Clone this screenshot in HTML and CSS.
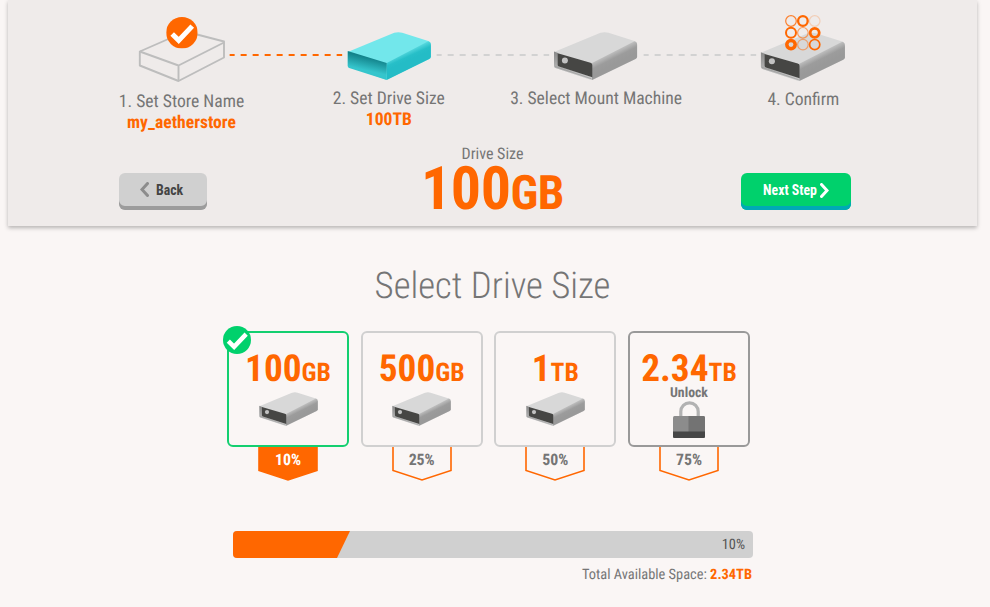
FILE: index.html
```html
<!DOCTYPE html>
<html lang="en">
<head>
<meta charset="utf-8">
<title>Select Drive Size</title>
<link rel="stylesheet" href="styles.css">
</head>
<body>
<svg class="defs" aria-hidden="true">
  <defs>
    <linearGradient id="side" gradientUnits="userSpaceOnUse" x1="56" y1="17" x2="63" y2="31">
      <stop offset="0" stop-color="#d8d8d8"/><stop offset=".65" stop-color="#9c9c9c"/><stop offset="1" stop-color="#999"/>
    </linearGradient>
    <linearGradient id="rim" x1="0" y1="0" x2="0" y2="1">
      <stop offset="0" stop-color="#888"/><stop offset="1" stop-color="#d0d0d0"/>
    </linearGradient>
    <linearGradient id="tealSide" gradientUnits="userSpaceOnUse" x1="57" y1="17" x2="62" y2="28">
      <stop offset="0" stop-color="#72e7eb"/><stop offset=".7" stop-color="#27bfc8"/><stop offset="1" stop-color="#24bcc6"/>
    </linearGradient>
    <linearGradient id="tealFront" gradientUnits="userSpaceOnUse" x1="16" y1="24" x2="13" y2="37">
      <stop offset="0" stop-color="#12828a"/><stop offset="1" stop-color="#35c5cc"/>
    </linearGradient>
    <symbol id="drive" viewBox="0 0 84 48">
      <path fill="#d8d8d8" d="M.5 20 47 .8Q51-.4 55 .7L81 9Q83.700 10 83.700 13V24.500Q83.700 26 82 27L40 47.500Q38.500 48.300 37 47.700L2 36Q.5 35.500.5 34Z"/>
      <path fill="url(#side)" d="M38.500 31 81 9.200Q83.700 10 83.700 13V24.500Q83.700 26 82 27L38.500 48Z"/>
      <path fill="url(#rim)" d="M.5 19.500 4.500 21V34L38.500 45V48L2 36Q.5 35.500.5 34Z"/>
      <path fill="none" stroke="#999" stroke-width=".7" d="M1.500 34.500 38 46.800"/>
      <path fill="#464644" d="M4.200 21.300 37 30.800Q38.800 31.300 38.800 33V45.300L5.500 34.600Q4.200 34.200 4.200 33Z"/>
      <circle cx="11.400" cy="28.400" r="3" fill="#c2c2c2"/>
    </symbol>
    <symbol id="tick" viewBox="0 0 30 30">
      <circle cx="15" cy="15" r="15" fill="currentColor"/>
      <path fill="none" stroke="#fff" stroke-width="4.800" d="M5.700 16.200 11.900 22.300 24.800 8.700"/>
    </symbol>
  </defs>
</svg>

<header class="panel">
  <div class="steps">
    <div class="step step-done">
      <svg class="step-icon" viewBox="0 0 88 76">
        <g fill="none" stroke="#bdbdbd" stroke-width="1.900" stroke-linejoin="round">
          <path d="M1.800 43.500 47.500 23.500 86 33.500V49.500L40.500 73 1.800 57.500Z"/>
          <path d="M1.800 43.500 40.500 57.500 86 34.500M40.500 57.500V73"/>
        </g>
        <use href="#tick" x="28.200" y="9" width="31.500" height="31.500" color="#ff6700"/>
      </svg>
      <div class="step-label">1. Set Store Name</div>
      <div class="step-value">my_aetherstore</div>
    </div>
    <svg class="link link-done" viewBox="0 0 119 2"><path d="M3.500 1H116"/></svg>
    <div class="step step-current">
      <svg class="step-icon" viewBox="0 0 88 76">
        <svg x="2.200" y="24" width="84" height="48" viewBox="0 0 84 48">
          <path fill="#72e7eb" d="M.5 20 47 .8Q51-.4 55 .7L81 9Q83.700 10 83.700 13V24.500Q83.700 26 82 27L39 47.800.5 34Z"/>
          <path fill="url(#tealSide)" d="M39.500 31 81 9.200Q83.700 10 83.700 13V24.500Q83.700 26 82 27L39.500 48Z"/>
          <path fill="url(#tealFront)" d="M.5 19 39.500 31V48L2 36Q.5 35.500.5 34Z"/>
        </svg>
      </svg>
      <div class="step-label">2. Set Drive Size</div>
      <div class="step-value">100TB</div>
    </div>
    <svg class="link" viewBox="0 0 119 2"><path d="M3.500 1H116"/></svg>
    <div class="step">
      <svg class="step-icon" viewBox="0 0 88 76"><use href="#drive" x="1.500" y="24" width="84" height="48"/></svg>
      <div class="step-label">3. Select Mount Machine</div>
    </div>
    <svg class="link" viewBox="0 0 119 2"><path d="M3.500 1H116"/></svg>
    <div class="step step-last">
      <svg class="step-icon" viewBox="0 0 88 76">
        <use href="#drive" x="1.300" y="24.500" width="85" height="48.500"/>
        <g fill="none" stroke="#ff6700">
          <circle cx="32" cy="13" r="5.300" stroke-width="1.200" opacity=".8"/>
          <circle cx="43.900" cy="13" r="4.800" stroke-width="2.300"/>
          <circle cx="55.700" cy="13" r="5.300" stroke-width="1.200" opacity=".22"/>
          <circle cx="32" cy="24.800" r="5" stroke-width="2"/>
          <circle cx="43.900" cy="24.800" r="5.300" stroke-width="1.200" opacity=".6"/>
          <circle cx="55.700" cy="24.800" r="4.500" stroke-width="2.800"/>
          <circle cx="32" cy="36.600" r="4.200" stroke-width="3.500"/>
          <circle cx="43.900" cy="36.600" r="5.300" stroke-width="1.200" opacity=".5"/>
          <circle cx="55.700" cy="36.600" r="5.100" stroke-width="1.700"/>
        </g>
      </svg>
      <div class="step-label">4. Confirm</div>
    </div>
  </div>
  <div class="controls">
    <button class="btn btn-back"><svg class="chev" viewBox="0 0 9 15"><path d="M7.500 1.500 2 7.500 7.500 13.500"/></svg>Back</button>
    <div class="summary">
      <div class="summary-label">Drive Size</div>
      <div class="summary-size">100<span class="unit">GB</span></div>
    </div>
    <button class="btn btn-next">Next Step<svg class="chev" viewBox="0 0 9 15"><path d="M1.500 1.500 7 7.500 1.500 13.500"/></svg></button>
  </div>
</header>

<main class="main">
  <h1 class="title">Select Drive Size</h1>
  <div class="options">
    <div class="option option-selected">
      <svg class="badge"><use href="#tick"/></svg>
      <div class="card"><div class="size">100<span class="unit">GB</span></div><svg class="card-drive"><use href="#drive"/></svg></div>
      <div class="tag"><svg class="tag-shape" viewBox="0 0 60 34"><path d="M1-2V23.500L30 32.900 59 23.500V-2"/></svg><span class="tag-text">10%</span></div>
    </div>
    <div class="option">
      <div class="card"><div class="size">500<span class="unit">GB</span></div><svg class="card-drive"><use href="#drive"/></svg></div>
      <div class="tag"><svg class="tag-shape" viewBox="0 0 60 34"><path d="M1-2V23.500L30 32.900 59 23.500V-2"/></svg><span class="tag-text">25%</span></div>
    </div>
    <div class="option">
      <div class="card"><div class="size">1<span class="unit">TB</span></div><svg class="card-drive"><use href="#drive"/></svg></div>
      <div class="tag"><svg class="tag-shape" viewBox="0 0 60 34"><path d="M1-2V23.500L30 32.900 59 23.500V-2"/></svg><span class="tag-text">50%</span></div>
    </div>
    <div class="option option-locked">
      <div class="card"><div class="size">2.34<span class="unit">TB</span></div>
        <div class="unlock">Unlock</div>
        <svg class="lock" viewBox="0 0 32 37">
          <path fill="none" stroke="#b2b2b2" stroke-width="3.200" d="M7.800 17V10.500a8.700 8.700 0 0 1 17.400 0V17"/>
          <rect y="15" width="32" height="22" rx="1.500" fill="#8c8c8c"/>
          <path fill="#737373" d="M15.500 15H30.500Q32 15 32 16.500V31H15.500Z"/>
          <path fill="#464646" d="M0 30.500H32V35.500Q32 37 30.500 37H1.500Q0 37 0 35.500Z"/>
        </svg>
      </div>
      <div class="tag"><svg class="tag-shape" viewBox="0 0 60 34"><path d="M1-2V23.500L30 32.900 59 23.500V-2"/></svg><span class="tag-text">75%</span></div>
    </div>
  </div>
  <div class="bar"><div class="bar-fill"></div><span class="bar-text">10%</span></div>
  <div class="total">Total Available Space: <b>2.34TB</b></div>
</main>
</body>
</html>
```
FILE: styles.css
```css
* { box-sizing: border-box; }
body {
  margin: 0;
  height: 607px;
  overflow: hidden;
  background: #faf6f5;
  color: #757575;
  font-family: "Roboto Condensed", Roboto, sans-serif;
  font-stretch: 75%;
  text-rendering: geometricPrecision;
}
svg { display: block; }
.defs { position: absolute; width: 0; height: 0; }

.panel {
  width: 969px;
  height: 226px;
  margin-left: 8px;
  padding: 8px 0 0 129.500px;
  background: #efebea;
  box-shadow: 0 2px 4px rgba(0, 0, 0, .27);
}
.steps { display: flex; height: 136px; }
.step {
  width: 88px;
  flex: none;
  display: flex;
  flex-direction: column;
  align-items: center;
  white-space: nowrap;
  font-size: 17.600px;
  line-height: 21px;
}
.step-icon { width: 88px; height: 76px; flex: none; margin-bottom: 5px; }
.step-done .step-icon { margin-bottom: 8px; }
.step-last .step-icon { margin-bottom: 6px; }
.step-value { color: #ff6700; font-weight: 700; }
.link { width: 119.300px; height: 2px; flex: none; margin-top: 46px; }
.link path { stroke: #d2d2d2; stroke-width: 2; stroke-dasharray: 6 6; stroke-dashoffset: 1; }
.link-done path { stroke: #ff6700; }

.controls { display: flex; width: 732px; margin-left: -18.500px; }
.btn {
  display: flex;
  align-items: center;
  justify-content: center;
  height: 37px;
  margin-top: 29px;
  padding: 0;
  border: 0;
  border-radius: 6px;
  font: inherit;
  font-size: 13.800px;
  font-weight: 700;
}
.btn-back { width: 88px; gap: 7px; padding: 0 3px 3px 0; background: #d0d0d0; color: #444; box-shadow: inset 0 -4px #9c9c9c; }
.btn-next { width: 110px; gap: 3px; padding: 0 0 3px; background: #00d16c; color: #fff; box-shadow: inset 0 -4px #00a9b5; }
.chev { width: 9px; height: 15px; fill: none; stroke: #fff; stroke-width: 3; stroke-linecap: round; }
.btn-back .chev { stroke: #8c8c8c; margin-top: -1px; }
.summary { flex: 1; padding-left: 37px; text-align: center; white-space: nowrap; }
.summary-label { font-size: 16px; line-height: 20px; }
.summary-size { margin-top: -6px; color: #ff6700; font-size: 60px; line-height: 62px; font-weight: 700; letter-spacing: -.5px; }
.summary-size .unit { font-size: 47.500px; }

.main { width: 523px; margin-left: 227px; }
.title { margin: 35px 0 21px; padding-left: 8px; text-align: center; font-size: 36.800px; line-height: 50px; height: 49px; font-weight: 300; }
.options { display: flex; justify-content: space-between; }
.option { position: relative; width: 122px; }
.badge { position: absolute; left: -4px; top: -5px; width: 28px; height: 28px; color: #00d16c; }
.card {
  height: 116px;
  padding-top: 16px;
  border: 2px solid #d0d0d0;
  border-radius: 6px;
  display: flex;
  flex-direction: column;
  align-items: center;
}
.option-selected .card { border-color: #13cf70; }
.option-locked .card { border-color: #999; }
.size { height: 40px; color: #ff6700; font-weight: 700; font-size: 37.300px; line-height: 40px; white-space: nowrap; }
.size .unit { font-size: 25.600px; }
.card-drive { width: 59px; height: 34px; margin-top: 3px; }
.unlock { margin-top: -4px; font-size: 13.800px; line-height: 16px; font-weight: 700; }
.lock { width: 32px; height: 37px; }
.tag { position: relative; width: 60px; height: 34px; margin: 0 auto; text-align: center; }
.tag-shape { position: absolute; left: 0; top: 0; width: 60px; height: 34px; fill: none; stroke: #ff6700; stroke-width: 1.600; }
.tag-text { position: relative; font-size: 15.800px; line-height: 26px; font-weight: 700; }
.option-selected .tag-shape { fill: #ff6700; }
.option-selected .tag-text { color: #fff; }

.bar {
  display: flex;
  justify-content: space-between;
  width: 520px;
  height: 27px;
  margin: 50px 0 0 6px;
  padding-right: 8px;
  border-radius: 4px;
  overflow: hidden;
  background: #d0d0d0;
}
.bar-fill { width: 117px; background: #ff6700; clip-path: polygon(0 0, 100% 0, 104px 100%, 0 100%); }
.bar-text { color: #555; font-size: 14.400px; line-height: 27px; }
.total { width: 525px; margin-top: 8px; text-align: right; font-size: 14.400px; line-height: 18px; }
.total b { color: #ff6700; }
```
